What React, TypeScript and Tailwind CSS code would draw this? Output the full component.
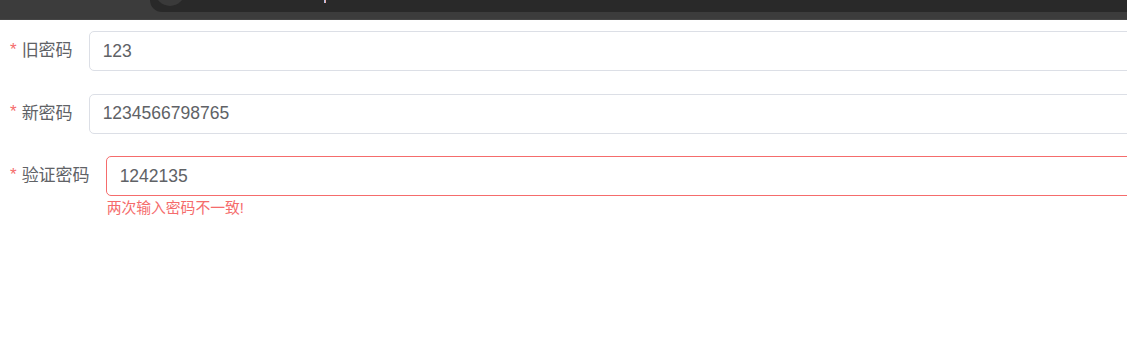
import { useState } from "react";

const FONT = { fontFamily: '"Liberation Sans", "Noto Sans CJK SC", sans-serif' };

type Field = {
  id: string;
  label: string;
  value: string;
  error?: string;
};

const fields: Field[] = [
  { id: "old", label: "旧密码", value: "123" },
  { id: "new", label: "新密码", value: "1234566798765" },
  { id: "check", label: "验证密码", value: "1242135", error: "两次输入密码不一致!" },
];

const TopBar = () => (
  <div className="relative h-[20px] w-full overflow-hidden border-b border-[#464646] bg-[#3c3c3c]">
    {/* browser chrome strip, cut off at the top */}
    <div className="absolute left-[150px] right-0 top-0 h-[12px] rounded-bl-[12px] bg-[#292929]">
      <div className="absolute -top-[10px] left-[5px] h-[16px] w-[30px] rounded-b-full bg-[#3a3a3a]" />
      <div className="absolute left-[174px] top-0 h-[3px] w-[2px] bg-gradient-to-r from-[#5b7fd0] via-white to-[#d05050]" />
    </div>
  </div>
);

const FormRow = ({ field }: { field: Field }) => {
  const [value, setValue] = useState(field.value);
  const hasError = !!field.error;
  return (
    <div className="flex items-start">
      <label className="flex h-[40px] shrink-0 items-center pl-[10px] pr-[16px] text-[17px] text-[#606266]">
        <span className="mr-[5px] -mt-[3px] text-[17px] text-[#f56c6c]">*</span>
        {field.label}
      </label>
      <div className="flex flex-1 flex-col">
        <input
          value={value}
          onChange={(e) => setValue(e.target.value)}
          className={`h-[40px] w-full rounded-[5px] border bg-white px-[13px] text-[17.5px] text-[#606266] outline-none ${
            hasError ? "border-[#f56c6c]" : "border-[#dcdfe6]"
          }`}
          style={FONT}
        />
        {hasError && (
          <div className="pl-[1px] pt-[3px] text-[14.8px] leading-[18px] text-[#f56c6c]">
            {field.error}
          </div>
        )}
      </div>
    </div>
  );
};

export default function App() {
  return (
    <div className="h-[339px] w-[1127px] overflow-hidden bg-white" style={FONT}>
      <TopBar />
      <div className="flex w-[1200px] flex-col gap-[22.5px] pt-[11px]">
        {fields.map((f) => (
          <FormRow key={f.id} field={f} />
        ))}
      </div>
    </div>
  );
}
